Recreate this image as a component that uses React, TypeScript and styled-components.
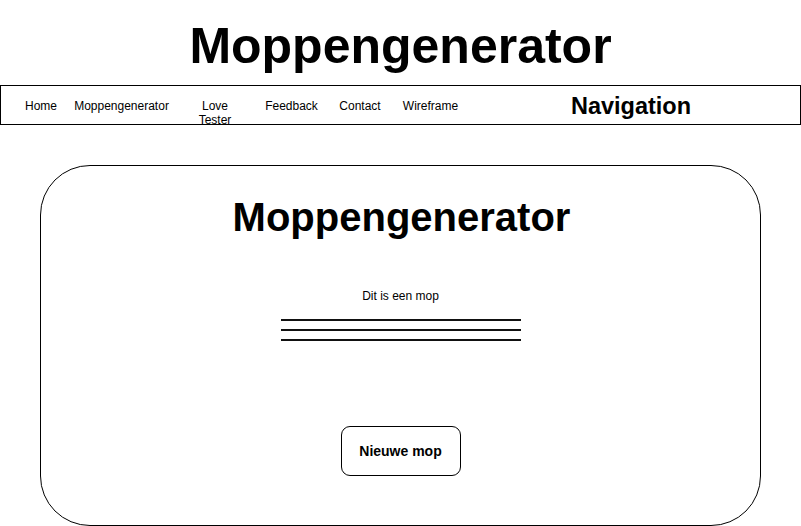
import React from "react";
import styled, { createGlobalStyle } from "styled-components";

const Global = createGlobalStyle`
  html, body { margin: 0; padding: 0; background: #fff; }
  body { font-family: "Liberation Sans", Arial, sans-serif; color: #000; }
  * { box-sizing: border-box; }
`;

const Page = styled.div`
  width: 801px;
  display: flex;
  flex-direction: column;
`;

const Title = styled.h1`
  margin: 0;
  padding-top: 16px;
  height: 85px;
  font-size: 50px;
  line-height: 60px;
  font-weight: 700;
  text-align: center;
`;

const NavBar = styled.nav`
  width: 801px;
  height: 40px;
  border: 1px solid #000;
  display: grid;
  grid-template-columns: 80px 81px 106px 47px 90px 51px 350px;
  align-items: start;
`;

const NavItem = styled.div`
  display: flex;
  justify-content: center;
  padding-top: 13px;
  font-size: 12px;
  line-height: 14px;
  white-space: nowrap;
`;

const WrapLabel = styled.span`
  max-width: 44px;
  white-space: normal;
  text-align: center;
`;

const NavTitle = styled.div`
  display: flex;
  justify-content: center;
  align-self: center;
  font-size: 23.5px;
  font-weight: 700;
  line-height: 28px;
  margin-top: -2px;
`;

const Card = styled.section`
  margin: 40px 0 0 40px;
  width: 721px;
  height: 361px;
  border: 1px solid #000;
  border-radius: 50px;
  display: flex;
  flex-direction: column;
  align-items: center;
  padding-top: 28px;
`;

const CardTitle = styled.h2`
  margin: 0 0 0 2px;
  font-size: 40px;
  line-height: 46px;
  font-weight: 700;
`;

const Joke = styled.p`
  margin: 49px 0 0;
  font-size: 12px;
  line-height: 14px;
`;

const Lines = styled.div`
  margin-top: 16px;
  display: flex;
  flex-direction: column;
  gap: 8px;
`;

const Rule = styled.div`
  width: 240px;
  height: 2px;
  background: #111;
`;

const Button = styled.button`
  margin-top: 85px;
  width: 120px;
  height: 50px;
  border: 1px solid #000;
  border-radius: 9px;
  background: #fff;
  font-family: "Liberation Sans", Arial, sans-serif;
  font-size: 14px;
  font-weight: 700;
  color: #000;
  cursor: pointer;
`;

const navItems = ["Home", "Moppengenerator", "Love Tester", "Feedback", "Contact", "Wireframe"];

export default function App() {
  return (
    <Page>
      <Global />
      <Title>Moppengenerator</Title>
      <NavBar>
        {navItems.map((item) => (
          <NavItem key={item}>
            {item === "Love Tester" ? <WrapLabel>{item}</WrapLabel> : item}
          </NavItem>
        ))}
        <NavTitle>Navigation</NavTitle>
      </NavBar>
      <Card>
        <CardTitle>Moppengenerator</CardTitle>
        <Joke>Dit is een mop</Joke>
        <Lines>
          <Rule />
          <Rule />
          <Rule />
        </Lines>
        <Button>Nieuwe mop</Button>
      </Card>
    </Page>
  );
}
